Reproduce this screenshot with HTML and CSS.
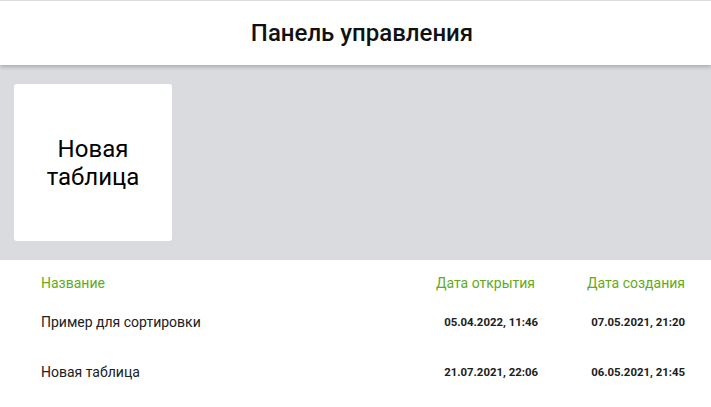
FILE: index.html
```html
<!DOCTYPE html>
<html lang="ru">
<head>
<meta charset="utf-8">
<title>Панель управления</title>
<link rel="stylesheet" href="styles.css">
</head>
<body>
<header class="topbar">
  <h1 class="title">Панель управления</h1>
</header>
<section class="boards">
  <div class="card">Новая<br>таблица</div>
</section>
<table class="list">
  <thead>
    <tr>
      <th class="c-name">Название</th>
      <th class="c-date">Дата открытия</th>
      <th class="c-date c-last">Дата создания</th>
    </tr>
  </thead>
  <tbody>
    <tr>
      <td class="c-name">Пример для сортировки</td>
      <td class="c-date">05.04.2022, 11:46</td>
      <td class="c-date c-last">07.05.2021, 21:20</td>
    </tr>
    <tr>
      <td class="c-name">Новая таблица</td>
      <td class="c-date">21.07.2021, 22:06</td>
      <td class="c-date c-last">06.05.2021, 21:45</td>
    </tr>
  </tbody>
</table>
</body>
</html>
```
FILE: styles.css
```css
html, body {
  margin: 0;
  padding: 0;
  background: #ffffff;
  font-family: Roboto, "Noto Sans", sans-serif;
  color: #202020;
}
.topbar {
  height: 64px;
  border-top: 1px solid #dcdcdc;
  background: #ffffff;
  display: flex;
  align-items: center;
  justify-content: center;
  padding-left: 13px;
  box-shadow: 0 2px 4px rgba(0,0,0,0.22);
  position: relative;
  z-index: 1;
}
.title {
  margin: 0;
  font-size: 24px;
  font-weight: 500;
  color: #111;
}
.boards {
  background: #dadbdf;
  padding: 19px 14px 19px;
  display: flex;
}
.card {
  width: 158px;
  height: 157px;
  background: #fff;
  border-radius: 3px;
  display: flex;
  align-items: center;
  justify-content: center;
  text-align: center;
  font-size: 24px;
  line-height: 28px;
  color: #000;
}
.list {
  width: 100%;
  border-collapse: collapse;
  margin-top: 12px;
}
.list th {
  font-weight: 400;
  font-size: 14px;
  color: #62ab18;
  height: 21px;
  padding: 0;
}
.list td {
  font-size: 14px;
  height: 50px;
  padding: 0;
}
.list tbody tr:first-child td {
  padding-top: 4px;
}
.c-name {
  text-align: left;
  padding-left: 41px !important;
}
.list th.c-date {
  text-align: right;
  padding-right: 5px;
}
.list td.c-date {
  text-align: right;
  font-weight: 700;
  font-size: 11.4px;
  padding-right: 2px;
}
.list th.c-last, .list td.c-last {
  width: 145px;
  padding-right: 26px;
}
```
